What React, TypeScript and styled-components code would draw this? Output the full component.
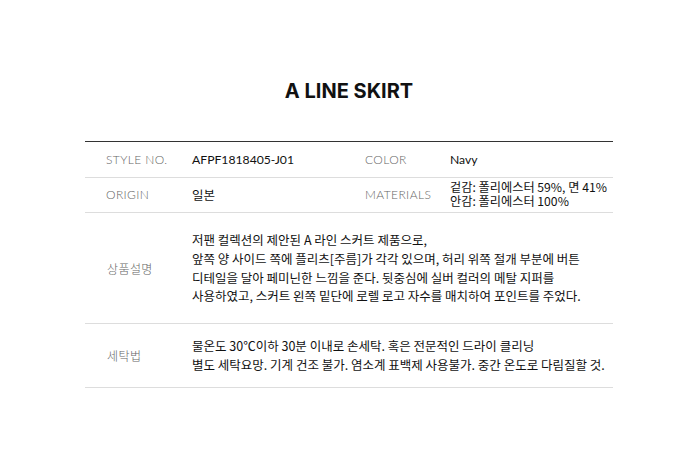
import React from "react";
import styled, { createGlobalStyle } from "styled-components";

const Global = createGlobalStyle`
  html, body { margin: 0; padding: 0; background: #fff; }
  body { font-family: "Noto Sans", "Noto Sans CJK KR", sans-serif; color: #222; }
`;

const Page = styled.div`
  width: 700px;
  height: 450px;
  box-sizing: border-box;
  padding: 0 87px 0 85px;
`;

const Title = styled.h1`
  margin: 0 0 36px;
  padding-top: 77px;
  text-align: center;
  font-family: "Inter", "Noto Sans", sans-serif;
  font-weight: 700;
  font-size: 20px;
  line-height: 28px;
  letter-spacing: 0;
  color: #111;
`;

const Table = styled.div`
  border-top: 1px solid #333;
`;

const Row = styled.div<{ $pair?: boolean; $pad: string; $h?: number }>`
  display: grid;
  grid-template-columns: ${(p) => (p.$pair ? "107px 173px 85px 1fr" : "107px 1fr")};
  align-items: center;
  border-bottom: 1px solid #ddd;
  padding: ${(p) => p.$pad};
  min-height: ${(p) => p.$h ?? 0}px;
  box-sizing: border-box;
`;

const Label = styled.div<{ $indent?: number }>`
  padding-left: ${(p) => p.$indent ?? 21}px;
  font-family: "Lato", "Noto Sans CJK KR", sans-serif;
  font-weight: 300;
  font-size: 12px;
  letter-spacing: 0.4px;
  color: #666;
`;

const Value = styled.div`
  font-family: "Noto Sans CJK KR", "Noto Sans", sans-serif;
  font-size: 12.5px;
  color: #111;
  white-space: nowrap;
`;

const Code = styled(Value)`
  font-family: "Lato", sans-serif;
  font-size: 12.2px;
`;

const Stack = styled(Value)`
  font-size: 12.2px;
  line-height: 14px;
`;

const Para = styled(Value)`
  line-height: 18.7px;
`;

export default function App() {
  return (
    <>
      <Global />
      <Page>
        <Title>A LINE SKIRT</Title>
        <Table>
          <Row $pair $pad="0" $h={36}>
            <Label>STYLE NO.</Label>
            <Code>AFPF1818405-J01</Code>
            <Label $indent={0}>COLOR</Label>
            <Code>Navy</Code>
          </Row>
          <Row $pair $pad="2px 0 4px" $h={35}>
            <Label>ORIGIN</Label>
            <Value>일본</Value>
            <Label $indent={0}>MATERIALS</Label>
            <Stack>
              겉감: 폴리에스터 59%, 면 41%
              <br />
              안감: 폴리에스터 100%
            </Stack>
          </Row>
          <Row $pad="18px 0 17px" $h={111}>
            <Label $indent={22}>상품설명</Label>
            <Para>
              저팬 컬렉션의 제안된 A 라인 스커트 제품으로,
              <br />
              앞쪽 양 사이드 쪽에 플리츠[주름]가 각각 있으며, 허리 위쪽 절개 부분에 버튼
              <br />
              디테일을 달아 페미닌한 느낌을 준다. 뒷중심에 실버 컬러의 메탈 지퍼를
              <br />
              사용하였고, 스커트 왼쪽 밑단에 로렐 로고 자수를 매치하여 포인트를 주었다.
            </Para>
          </Row>
          <Row $pad="13px 0 13px" $h={64}>
            <Label $indent={22}>세탁법</Label>
            <Para>
              물온도 30℃이하 30분 이내로 손세탁. 혹은 전문적인 드라이 클리닝
              <br />
              별도 세탁요망. 기계 건조 불가. 염소계 표백제 사용불가. 중간 온도로 다림질할 것.
            </Para>
          </Row>
        </Table>
      </Page>
    </>
  );
}
